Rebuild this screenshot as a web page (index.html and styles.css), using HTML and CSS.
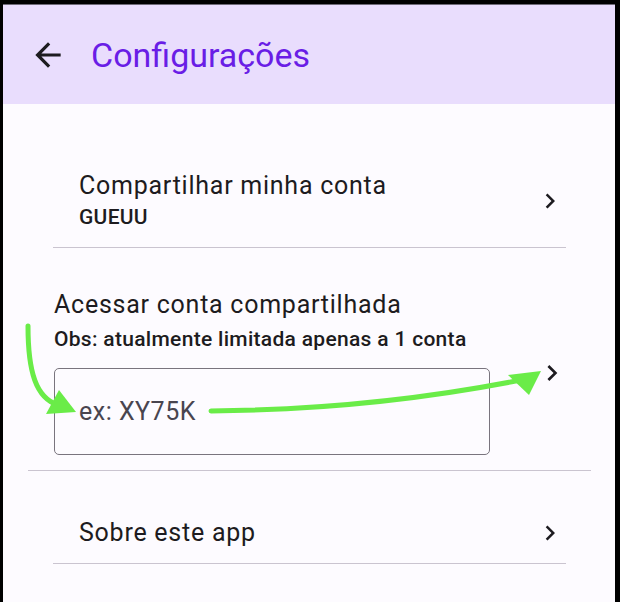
FILE: index.html
```html
<!DOCTYPE html>
<html lang="pt">
<head>
<meta charset="utf-8">
<title>Configurações</title>
<link rel="stylesheet" href="styles.css">
</head>
<body>
<div class="frame">
  <header class="appbar">
    <svg class="back" viewBox="0 0 24 24" width="38" height="38"><path d="M20 11H7.83l5.59-5.59L12 4l-8 8 8 8 1.41-1.41L7.83 13H20v-2z" fill="#1d1b20"/></svg>
    <h1 class="title">Configurações</h1>
  </header>
  <main class="content">
    <div class="row row-a">
      <div class="texts">
        <div class="label">Compartilhar minha conta</div>
        <div class="sub">GUEUU</div>
      </div>
      <svg class="chev" viewBox="0 0 24 24" width="30" height="30"><path d="M10 6L8.59 7.41 13.17 12l-4.58 4.59L10 18l6-6z" fill="#1d1b20"/></svg>
    </div>
    <div class="row row-b">
      <div class="texts">
        <div class="label">Acessar conta compartilhada</div>
        <div class="sub obs">Obs: atualmente limitada apenas a 1 conta</div>
        <div class="field"><span class="placeholder">ex: XY75K</span></div>
      </div>
      <svg class="chev chev-b" viewBox="0 0 24 24" width="32" height="32"><path d="M10 6L8.59 7.41 13.17 12l-4.58 4.59L10 18l6-6z" fill="#1d1b20"/></svg>
    </div>
    <div class="row row-c">
      <div class="texts">
        <div class="label">Sobre este app</div>
      </div>
      <svg class="chev" viewBox="0 0 24 24" width="30" height="30"><path d="M10 6L8.59 7.41 13.17 12l-4.58 4.59L10 18l6-6z" fill="#1d1b20"/></svg>
    </div>
  </main>
</div>
<svg class="annot" viewBox="0 0 620 602" width="620" height="602">
  <path d="M28 326 C28 372 36 398 58 405" fill="none" stroke="#6aec48" stroke-width="5" stroke-linecap="round"/>
  <polygon points="76,412 46,414 59,390" fill="#6aec48"/>
  <path d="M211 411 C330 410 430 398 521 380" fill="none" stroke="#6aec48" stroke-width="5" stroke-linecap="round"/>
  <polygon points="541,371 508,375 529,395" fill="#6aec48"/>
</svg>
</body>
</html>
```

FILE: styles.css
```css
html, body {
  margin: 0;
  padding: 0;
  background: #000;
}
body {
  position: relative;
  width: 620px;
  height: 602px;
  overflow: hidden;
  font-family: Roboto, "Noto Sans", sans-serif;
  color: #1d1b20;
}
.frame {
  margin: 4px 0 0 3px;
  width: 612px;
  height: 598px;
  background: #fdfbff;
  display: flex;
  flex-direction: column;
}
.appbar {
  height: 100px;
  background: #e9ddfd;
  border-top: 1px solid #6f6a78;
  box-sizing: border-box;
  display: flex;
  align-items: center;
  padding-left: 26px;
  padding-top: 1px;
}
.back {
  display: block;
  margin-right: 24px;
}
.title {
  margin: 0;
  font-size: 34px;
  font-weight: 400;
  color: #6a1de6;
  line-height: 40px;
}
.content {
  display: flex;
  flex-direction: column;
}
.row {
  display: flex;
  align-items: center;
  justify-content: space-between;
  border-bottom: 1px solid #cac4d0;
}
.row-a {
  margin: 0 49px 0 50px;
  padding: 66px 1px 15px 26px;
}
.row-b {
  margin: 0 24px 0 25px;
  padding: 41px 23px 15px 26px;
  align-items: flex-start;
}
.row-c {
  margin: 0 49px 0 50px;
  padding: 46px 1px 14px 26px;
}
.texts {
  display: flex;
  flex-direction: column;
}
.label {
  font-size: 25px;
  line-height: 32px;
  letter-spacing: 0.75px;
}
.sub {
  font-size: 21px;
  line-height: 30px;
  font-weight: 500;
  letter-spacing: 0.3px;
}
.obs {
  margin-top: 3px;
}
.field {
  margin-top: 14px;
  width: 436px;
  height: 87px;
  box-sizing: border-box;
  border: 1.5px solid #79747e;
  border-radius: 5px;
  display: flex;
  align-items: center;
  padding-left: 24px;
}
.placeholder {
  font-size: 25px;
  letter-spacing: 0.5px;
  color: #49454f;
}
.chev {
  display: block;
  flex: none;
}
.chev-b {
  margin-top: 68px;
}
.annot {
  position: absolute;
  left: 0;
  top: 0;
  pointer-events: none;
}
```
